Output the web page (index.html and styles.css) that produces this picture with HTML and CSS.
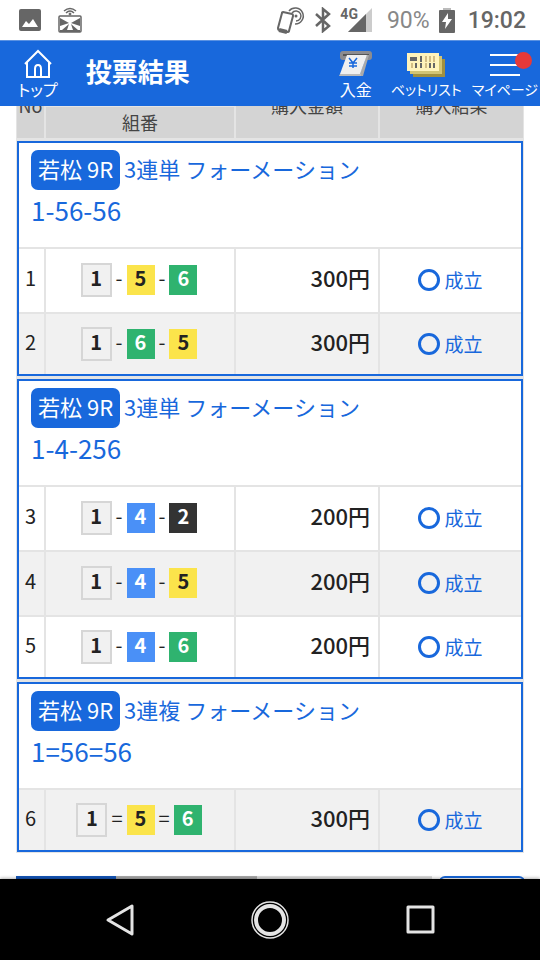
FILE: index.html
```html
<!DOCTYPE html>
<html lang="ja">
<head>
    <meta charset="UTF-8">
    <meta name="viewport" content="width=device-width, initial-scale=1.0">
    <title>投票結果</title>
    <link rel="stylesheet" href="styles.css">
</head>
<body>
    <div class="screen">
        <!-- Status bar -->
        <div class="status-bar">
            <div class="status-left">
                <svg width="22" height="22" viewBox="0 0 22 22"><rect width="22" height="22" rx="2" fill="#666"/><path d="M3 18l4-6 3 3 4-5 5 8z" fill="#fff"/></svg>
                <svg width="24" height="26" viewBox="0 0 24 26" fill="none" stroke="#666">
                    <path d="M6 4q6-5 12 0M8 6q4-4 8 0" stroke-width="1.5"/><circle cx="12" cy="7" r="1" fill="#666"/>
                    <rect x="1" y="9" width="22" height="16" rx="1" stroke-width="1.5"/>
                    <path d="M2 11l9 5-9 3zM22 11l-9 5 9 3zM4 23l7-6-2 6zM20 23l-7-6 2 6z" fill="#666" stroke="none"/>
                    <path d="M2 24h20" stroke-width="2"/>
                </svg>
            </div>
            <div class="status-right">
                <svg width="30" height="30" viewBox="0 0 30 30" fill="none" stroke="#666" stroke-width="2">
                    <path d="M7 7l9 2q1 0 1 2l-4 15q0 1-2 1l-8-2q-1 0-1-2l4-15q0-1 1-1z"/>
                    <path d="M3 25l8 2" stroke-width="4"/>
                    <circle cx="20" cy="11" r="1.5" fill="#666" stroke="none"/>
                    <path d="M16 8a5 5 0 1 1 4 8M13 6a8 8 0 1 1 6 13" stroke-width="1.5"/>
                </svg>
                <svg width="16" height="26" viewBox="0 0 16 26" fill="none" stroke="#666" stroke-width="2.5"><path d="M1 7l13 12-6 5V2l6 5L1 19"/></svg>
                <div class="signal">
                    <span class="signal-label">4G</span>
                    <svg width="26" height="24" viewBox="0 0 26 24"><path d="M26 0v24H2z" fill="#ccc"/><path d="M20 6v18H2z" fill="#666"/></svg>
                </div>
                <span class="battery-text">90%</span>
                <svg width="16" height="25" viewBox="0 0 16 25"><path d="M4 0h8v3H4z" fill="#bbb"/><rect y="2" width="16" height="23" rx="1" fill="#666"/><path d="M9 5L3 14h4l-1 7 7-10H9z" fill="#fff"/></svg>
                <span class="clock">19:02</span>
            </div>
        </div>

        <!-- App header -->
        <header class="app-header">
            <a class="header-link" href="#">
                <svg width="32" height="30" viewBox="0 0 32 30" fill="none" stroke="#fff" stroke-width="2"><path d="M3 15L16 2l13 13M5 13v15h22V13M13 28v-8q0-4 3-4t3 4v8"/></svg>
                <span>トップ</span>
            </a>
            <h1 class="title">投票結果</h1>
            <nav class="header-nav">
                <a class="header-link" href="#">
                    <svg width="34" height="30" viewBox="0 0 34 30">
                        <rect x="1" y="2" width="32" height="9" rx="3" fill="#8c8c90"/><path d="M4 6h26" stroke="#555" stroke-width="2"/>
                        <path d="M28 6h2l-6 21h-4z" fill="#aaa"/><path d="M8 6h20l-7 19H1z" fill="#f0f0f0"/><path d="M1 25h21v2H0z" fill="#bbb"/>
                        <path d="M10 9l4 5 4-5M14 14v5M10 14h8M10 17h8" fill="none" stroke="#1868dc" stroke-width="1.5"/>
                    </svg>
                    <span>入金</span>
                </a>
                <a class="header-link tight" href="#">
                    <svg width="40" height="30" viewBox="0 0 40 30">
                        <path d="M7 10h32v18H7z" fill="#a09040"/><path d="M4 7h32v18H4z" fill="#d2c474"/><path d="M1 4h32v18H1z" fill="#fff3bb"/>
                        <path d="M4 10h7" stroke="#666" stroke-width="4"/><path d="M15 7v6M10 14v5M15 14v5M24 14v5M28 14v5" stroke="#666" stroke-width="2"/>
                        <path d="M20 7v6M24 7v6M28 7v6M6 14v5M20 14v5" stroke="#d3bd85" stroke-width="2"/>
                    </svg>
                    <span>ベットリスト</span>
                </a>
                <a class="header-link tight my-page" href="#">
                    <span class="menu-icon"><span class="menu-dot"></span></span>
                    <span>マイページ</span>
                </a>
            </nav>
        </header>

        <main class="content">
            <table class="results">
                <colgroup>
                    <col class="col-no">
                    <col>
                    <col class="col-amount">
                    <col class="col-result">
                </colgroup>
                <thead>
                    <tr>
                        <th rowspan="2">No</th>
                        <th></th>
                        <th rowspan="2">購入金額</th>
                        <th rowspan="2">購入結果</th>
                    </tr>
                    <tr>
                        <th>組番</th>
                    </tr>
                </thead>
                <tbody class="group">
                    <tr class="race">
                        <td colspan="4">
                            <div class="race-name"><span class="badge">若松 9R</span><span class="type">3連単 フォーメーション</span></div>
                            <div class="race-bet">1-56-56</div>
                        </td>
                    </tr>
                    <tr class="bet">
                        <td class="no">1</td>
                        <td><div class="combo"><b class="boat boat1">1</b><span class="sep">-</span><b class="boat boat5">5</b><span class="sep">-</span><b class="boat boat6">6</b></div></td>
                        <td class="amount">300円</td>
                        <td><div class="result"><i class="ring"></i>成立</div></td>
                    </tr>
                    <tr class="bet shaded">
                        <td class="no">2</td>
                        <td><div class="combo"><b class="boat boat1">1</b><span class="sep">-</span><b class="boat boat6">6</b><span class="sep">-</span><b class="boat boat5">5</b></div></td>
                        <td class="amount">300円</td>
                        <td><div class="result"><i class="ring"></i>成立</div></td>
                    </tr>
                </tbody>
                <tbody class="group">
                    <tr class="race">
                        <td colspan="4">
                            <div class="race-name"><span class="badge">若松 9R</span><span class="type">3連単 フォーメーション</span></div>
                            <div class="race-bet">1-4-256</div>
                        </td>
                    </tr>
                    <tr class="bet">
                        <td class="no">3</td>
                        <td><div class="combo"><b class="boat boat1">1</b><span class="sep">-</span><b class="boat boat4">4</b><span class="sep">-</span><b class="boat boat2">2</b></div></td>
                        <td class="amount">200円</td>
                        <td><div class="result"><i class="ring"></i>成立</div></td>
                    </tr>
                    <tr class="bet shaded">
                        <td class="no">4</td>
                        <td><div class="combo"><b class="boat boat1">1</b><span class="sep">-</span><b class="boat boat4">4</b><span class="sep">-</span><b class="boat boat5">5</b></div></td>
                        <td class="amount">200円</td>
                        <td><div class="result"><i class="ring"></i>成立</div></td>
                    </tr>
                    <tr class="bet">
                        <td class="no">5</td>
                        <td><div class="combo"><b class="boat boat1">1</b><span class="sep">-</span><b class="boat boat4">4</b><span class="sep">-</span><b class="boat boat6">6</b></div></td>
                        <td class="amount">200円</td>
                        <td><div class="result"><i class="ring"></i>成立</div></td>
                    </tr>
                </tbody>
                <tbody class="group">
                    <tr class="race">
                        <td colspan="4">
                            <div class="race-name"><span class="badge">若松 9R</span><span class="type">3連複 フォーメーション</span></div>
                            <div class="race-bet">1=56=56</div>
                        </td>
                    </tr>
                    <tr class="bet shaded">
                        <td class="no">6</td>
                        <td><div class="combo"><b class="boat boat1">1</b><span class="sep">=</span><b class="boat boat5">5</b><span class="sep">=</span><b class="boat boat6">6</b></div></td>
                        <td class="amount">300円</td>
                        <td><div class="result"><i class="ring"></i>成立</div></td>
                    </tr>
                </tbody>
            </table>

            <!-- Pager, runs on below the fold -->
            <div class="pager">
                <div class="pager-bar"><span class="pager-current"></span><span class="pager-next"></span></div>
                <div class="pager-box"></div>
            </div>
        </main>

        <!-- Android navigation -->
        <div class="system-nav">
            <svg width="40" height="40" viewBox="0 0 40 40" fill="none" stroke="#e4e4e4" stroke-width="3" stroke-linejoin="round"><path d="M8 20L32 6v28z"/></svg>
            <svg width="40" height="40" viewBox="0 0 40 40" fill="none" stroke="#e4e4e4"><circle cx="20" cy="20" r="18" stroke-width="1.5"/><circle cx="20" cy="20" r="14" stroke-width="4"/></svg>
            <svg width="40" height="40" viewBox="0 0 40 40" fill="none" stroke="#e4e4e4" stroke-width="3" stroke-linejoin="round"><rect x="8" y="7" width="25" height="25"/></svg>
        </div>
    </div>
</body>
</html>
```

FILE: styles.css
```css
* {
    box-sizing: border-box;
}

body {
    margin: 0;
    font-family: "Noto Sans CJK JP", sans-serif;
    color: #222;
    background: #fff;
}

svg {
    display: block;
    flex: none;
}

.screen {
    display: flex;
    flex-direction: column;
    height: 100vh;
    overflow: hidden;
}

/* status bar */
.status-bar {
    display: flex;
    flex: none;
    justify-content: space-between;
    align-items: center;
    height: 40px;
    padding: 0 14px 0 19px;
    font-family: Roboto, sans-serif;
    font-weight: 500;
    font-size: 23px;
    color: #666;
}

.status-left,
.status-right {
    display: flex;
    align-items: center;
}

.status-left {
    gap: 17px;
}

.status-right {
    gap: 9px;
}

.signal {
    display: flex;
    align-items: flex-start;
}

.signal-label {
    margin-right: -12px;
    font-size: 14px;
    line-height: 12px;
    font-weight: 700;
}

.battery-text {
    margin-left: 6px;
    color: #888;
    font-weight: 400;
}

.clock {
    margin-left: 4px;
}

/* app header */
.app-header {
    display: flex;
    flex: none;
    height: 66px;
    padding: 8px 2px 0 18px;
    background: #1868dc;
    border-top: 1px solid #5b92e2;
    color: #fff;
    position: relative;
    z-index: 1;
}

.header-link {
    display: flex;
    flex-direction: column;
    align-items: center;
    color: #fff;
    text-decoration: none;
    font-size: 16px;
    line-height: 20px;
    white-space: nowrap;
    font-feature-settings: "palt";
}

.tight {
    font-size: 14px;
}

.title {
    margin: 4px 0 0 28px;
    font-size: 26px;
    line-height: 36px;
    font-weight: 700;
}

.header-nav {
    display: flex;
    gap: 18px;
    margin-left: auto;
}

.my-page {
    margin-left: -8px;
}

.menu-icon {
    width: 30px;
    height: 22px;
    margin: 5px 0 3px;
    border-top: 2px solid #fff;
    border-bottom: 2px solid #fff;
    background: linear-gradient(#fff, #fff) center / 100% 2px no-repeat;
    position: relative;
}

.menu-dot {
    position: absolute;
    top: -4px;
    right: -12px;
    width: 17px;
    height: 17px;
    border-radius: 50%;
    background: #e63939;
}

/* results table */
.content {
    flex: 1;
    min-height: 0;
    overflow: hidden;
}

.results {
    width: calc(100% - 32px);
    margin: -34px 16px 0;
    padding: 0 1px 1px;
    background: #e4e4e4;
    table-layout: fixed;
    border-spacing: 0;
}

.col-no {
    width: 27px;
}

.col-amount {
    width: 144px;
}

.col-result {
    width: 145px;
}

.results th {
    height: 33px;
    padding: 0 0 2px;
    background: #d4d4d4;
    border-top: 2px solid #e4e4e4;
    border-left: 2px solid #e4e4e4;
    font-size: 18px;
    line-height: 20px;
    font-weight: 400;
    color: #444;
}

.results th:first-child[rowspan] {
    border-left: 0;
}

.results td {
    padding: 0;
    text-align: center;
    font-size: 20px;
    line-height: 24px;
}

.group::before {
    content: "";
    display: block;
    height: 3px;
}

.results .race td {
    height: 106px;
    padding: 7px 12px 0;
    background: #fff;
    border: 2px solid #1868dc;
    border-bottom: 0;
    text-align: left;
    vertical-align: top;
    color: #1868dc;
}

.race-name {
    display: flex;
    align-items: center;
    gap: 4px;
    font-size: 22px;
    line-height: 36px;
}

.badge {
    padding: 0 7px 4px;
    border-radius: 7px;
    background: #1868dc;
    color: #fff;
}

.type {
    padding-bottom: 4px;
}

.race-bet {
    font-size: 26px;
    line-height: 40px;
}

/* cell lines are inset shadows so the blue frame stays unbroken */
.bet td {
    --left: #e4e4e4;
    --right: transparent;
    --bottom: transparent;
    height: 65px;
    background: #fff;
    box-shadow: inset 0 -2px var(--bottom), inset 2px 0 var(--left), inset -2px 0 var(--right), inset 0 2px #e4e4e4;
}

.bet.shaded td {
    background: #f1f1f1;
}

.bet td:first-child {
    --left: #1868dc;
}

.bet td:last-child {
    --right: #1868dc;
}

.bet:last-child td {
    --bottom: #1868dc;
    height: 64px;
}

.results .no {
    padding-bottom: 4px;
}

.combo,
.result {
    display: flex;
    align-items: center;
    justify-content: center;
    gap: 4px;
}

.sep {
    padding-bottom: 4px;
}

.boat {
    width: 28px;
    height: 30px;
    line-height: 26px;
    text-align: center;
    font-weight: 700;
    color: #fff;
}

.boat1 {
    width: 31px;
    height: 34px;
    border: 2px solid #d6d6d6;
    background: #f1f1f1;
    color: #222;
}

.boat2 {
    background: #333;
}

.boat4 {
    background: #4a90f7;
}

.boat5 {
    background: #fbe44b;
    color: #222;
}

.boat6 {
    background: #2fb36f;
}

.results .amount {
    padding: 0 8px 6px 0;
    text-align: right;
    font-size: 22px;
    font-weight: 500;
}

.result {
    font-size: 19px;
    color: #1868dc;
}

.ring {
    width: 22px;
    height: 22px;
    border: 3px solid #1868dc;
    border-radius: 50%;
}

/* pager */
.pager {
    display: flex;
    gap: 7px;
    margin: 23px 15px 0 16px;
}

.pager-bar {
    display: flex;
    flex: 1;
    height: 40px;
    background: #ddd;
}

.pager-current {
    width: 24%;
    background: #1556b8;
}

.pager-next {
    width: 34%;
    background: #aaa;
}

.pager-box {
    width: 86px;
    height: 40px;
    border: 2px solid #1868dc;
    border-radius: 6px;
}

/* system navigation */
.system-nav {
    display: flex;
    flex: none;
    justify-content: center;
    align-items: center;
    gap: 110px;
    height: 81px;
    background: #000;
    box-shadow: 0 -1px 3px rgba(0, 0, 0, 0.3);
    position: relative;
}
```
